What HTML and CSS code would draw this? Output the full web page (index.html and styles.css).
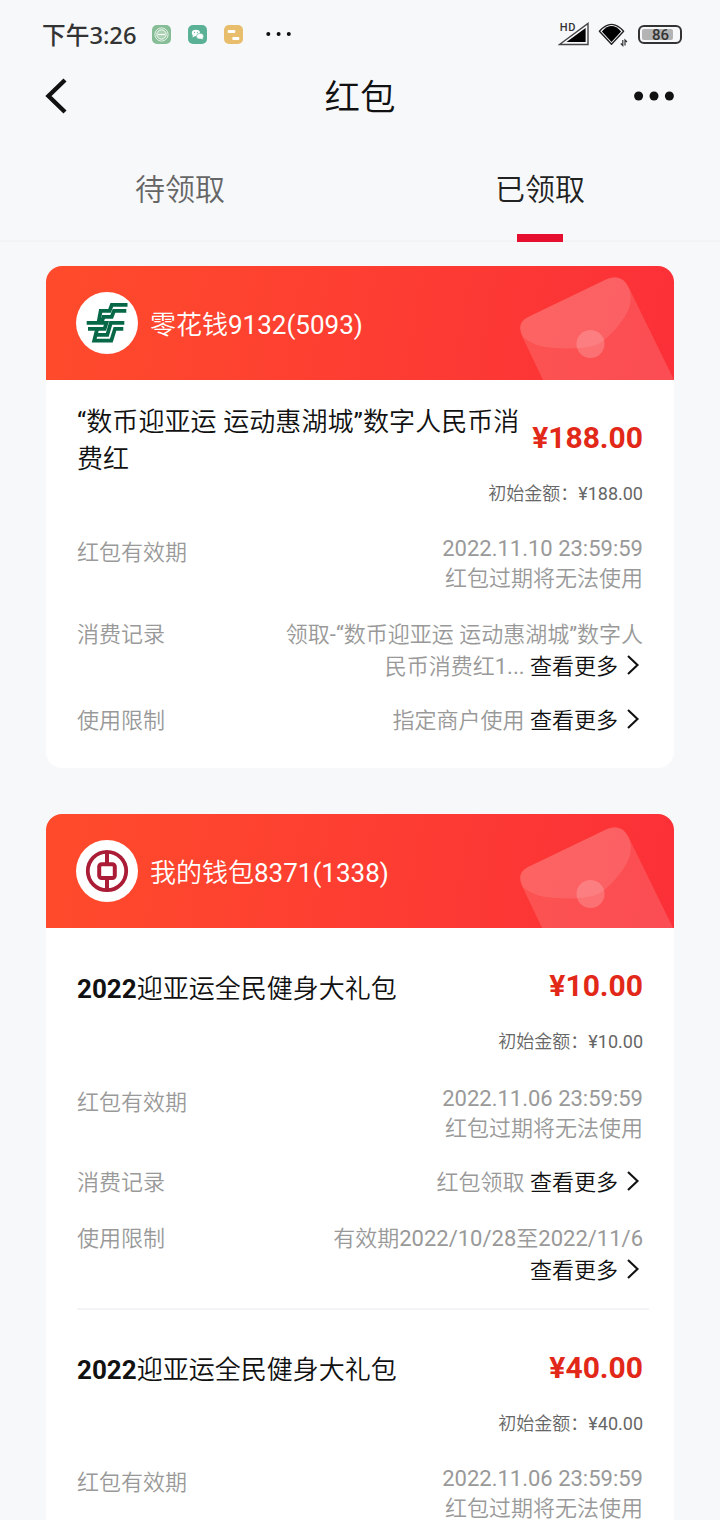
FILE: index.html
```html
<!DOCTYPE html>
<html lang="zh-CN">
<head>
<meta charset="utf-8">
<title>红包</title>
<link rel="stylesheet" href="styles.css">
</head>
<body>
<svg class="defs" width="0" height="0">
  <symbol id="chev" viewBox="0 0 14 22"><path d="M2 2 L11.5 11 L2 20" fill="none" stroke="#111" stroke-width="2.1"/></symbol>
  <symbol id="envelope" viewBox="0 0 160 114">
    <path d="M30 116 L8 70 Q2 57 14 51 L93 13 Q108 7 115 22 L161 116 Z" fill="#fff" fill-opacity=".14"/>
    <path d="M9 71 Q2 57 14 51 L93 13 Q108 7 115 22 Q121 38 107 56 Q97 70 86 77 Q74 84 40 82 Q20 81 9 71 Z" fill="#fff" fill-opacity=".1"/>
    <circle cx="76.5" cy="78" r="14" fill="#fff" fill-opacity=".19"/>
  </symbol>
</svg>
<div class="screen">
  <header class="top">
    <div class="status">
      <span class="clock">下午3:26</span>
      <svg class="app" viewBox="0 0 19 19"><rect width="19" height="19" rx="5" fill="#86bd96"/><circle cx="9.5" cy="9.5" r="6.6" fill="none" stroke="#e6f4e8" stroke-width="1"/><circle cx="9.5" cy="9.5" r="4.7" fill="#a9d1b2" stroke="#fff" stroke-width="1"/><path d="M6 9.5h7" stroke="#fff" stroke-width="1.2"/></svg>
      <svg class="app" viewBox="0 0 19 19"><rect width="19" height="19" rx="5" fill="#5bb196"/><ellipse cx="7.9" cy="8" rx="4.1" ry="3.3" fill="#fff"/><path d="M5 10l-.5 2.4 2.6-1.3z" fill="#fff"/><ellipse cx="12" cy="11.2" rx="3.6" ry="2.9" fill="#fff" stroke="#5bb196" stroke-width=".6"/><path d="M12.5 13.4l2.2 1.2-.3-2.2z" fill="#fff"/><circle cx="6.6" cy="7.3" r=".6" fill="#5bb196"/><circle cx="9.3" cy="7.3" r=".6" fill="#5bb196"/></svg>
      <svg class="app" viewBox="0 0 19 19"><rect width="19" height="19" rx="5" fill="#e8bd6c"/><rect x="3.7" y="5" width="7.6" height="3" rx="1" fill="#fff"/><rect x="8.3" y="12" width="7" height="3" rx="1" fill="#fff"/></svg>
      <svg class="more-apps" viewBox="0 0 26 4"><g fill="#111"><circle cx="2.3" cy="2" r="2"/><circle cx="12.6" cy="2" r="2"/><circle cx="22.8" cy="2" r="2"/></g></svg>
      <span class="hd">HD</span>
      <svg class="signal" viewBox="0 0 32 24"><path d="M1.5 22.5 L30 1.5 V22.5 Z" fill="#f7f8fa" stroke="#444" stroke-width="1.4"/><path d="M8.5 20 L27.6 6 V20 Z" fill="#000"/></svg>
      <svg class="wifi" viewBox="0 0 30 24"><path d="M1.4 8.3 Q13.5 -5.5 25.6 8.3 L13.5 21.3 Z" fill="#f7f8fa" stroke="#222" stroke-width="1.4" stroke-linejoin="round"/><path d="M3.9 8.5 Q13.5 -2.4 23.1 8.5 L13.5 19 Z" fill="#000"/><path d="M24.8 17v5.5l-2-2M27 22.5V17l2 2" fill="none" stroke="#333" stroke-width="1.2"/></svg>
      <span class="battery"><span class="charge">86</span></span>
    </div>
    <nav class="navbar">
      <svg class="back" viewBox="0 0 22 36"><path d="M20 2 L3.5 18 L20 34" fill="none" stroke="#111" stroke-width="4.4"/></svg>
      <h1>红包</h1>
      <svg class="dots" viewBox="0 0 40 10"><g fill="#111"><circle cx="4.6" cy="5" r="4.5"/><circle cx="20" cy="5" r="4.5"/><circle cx="35.4" cy="5" r="4.5"/></g></svg>
    </nav>
    <div class="tabs">
      <span class="tab">待领取</span>
      <span class="tab active">已领取</span>
    </div>
  </header>
  <main>
    <section class="card">
      <div class="card-head">
        <svg class="logo" viewBox="0 0 62 62"><circle cx="31" cy="31" r="31" fill="#fff"/><g fill="none" stroke="#066847" stroke-width="3.8"><path d="M51.5 12.8H35.8L33.6 18.8H24.7L22.4 31"/><path d="M50.3 18.8H38L35.7 24.8H27.5L25.5 31"/><path d="M10.7 30.9H30.5L28.6 36.8H12"/><path d="M48.3 30.9H34.8L31.3 42.8H20.5"/><path d="M47.3 36.8H39L35.3 48.6H18.2L21.2 36.8"/></g></svg>
        <span class="wallet">零花钱9132(5093)</span>
        <svg class="envelope"><use href="#envelope"/></svg>
      </div>
      <article class="packet compact">
        <div class="summary"><h2>“数币迎亚运 运动惠湖城”数字人民币消费红</h2><strong>¥188.00</strong></div>
        <p class="initial">初始金额：¥188.00</p>
        <div class="row date"><span class="label">红包有效期</span><span class="value">2022.11.10 23:59:59<br>红包过期将无法使用</span></div>
        <div class="row"><span class="label">消费记录</span><span class="value">领取-“数币迎亚运 运动惠湖城”数字人<br>民币消费红1... <a class="more">查看更多<svg class="chev"><use href="#chev"/></svg></a></span></div>
        <div class="row limit"><span class="label">使用限制</span><span class="value">指定商户使用 <a class="more">查看更多<svg class="chev"><use href="#chev"/></svg></a></span></div>
      </article>
    </section>
    <section class="card">
      <div class="card-head low">
        <svg class="logo" viewBox="0 0 62 62"><circle cx="31" cy="31" r="31" fill="#fff"/><g fill="none" stroke="#ab1d36"><circle cx="31" cy="31" r="19.2" stroke-width="3.8"/><path d="M31 12V23M31 39V50" stroke-width="4"/><rect x="23.2" y="24.2" width="15.6" height="13.8" rx="2.5" stroke-width="4"/></g></svg>
        <span class="wallet">我的钱包8371(1338)</span>
        <svg class="envelope"><use href="#envelope"/></svg>
      </div>
      <article class="packet">
        <div class="summary"><h2><b>2022</b>迎亚运全民健身大礼包</h2><strong>¥10.00</strong></div>
        <p class="initial">初始金额：¥10.00</p>
        <div class="row date"><span class="label">红包有效期</span><span class="value">2022.11.06 23:59:59<br>红包过期将无法使用</span></div>
        <div class="row"><span class="label">消费记录</span><span class="value">红包领取 <a class="more">查看更多<svg class="chev"><use href="#chev"/></svg></a></span></div>
        <div class="row limit"><span class="label">使用限制</span><span class="value">有效期2022/10/28至2022/11/6<br><a class="more">查看更多<svg class="chev"><use href="#chev"/></svg></a></span></div>
      </article>
      <article class="packet next">
        <div class="summary"><h2><b>2022</b>迎亚运全民健身大礼包</h2><strong>¥40.00</strong></div>
        <p class="initial">初始金额：¥40.00</p>
        <div class="row date"><span class="label">红包有效期</span><span class="value">2022.11.06 23:59:59<br>红包过期将无法使用</span></div>
      </article>
    </section>
  </main>
</div>
</body>
</html>
```
FILE: styles.css
```css
* { box-sizing: border-box; }
body {
  margin: 0;
  background: #f7f8fa;
  color: #111;
  font-family: Roboto, "Noto Sans CJK SC DemiLight", "Noto Sans CJK SC Light", "Noto Sans CJK SC", sans-serif;
}
h1, h2, p { margin: 0; font-weight: 400; }
svg { display: block; flex: none; }
.defs { position: absolute; }
.screen { width: 720px; height: 1520px; overflow: hidden; }

.top { height: 242px; border-bottom: 2px solid #f2f3f5; }
.status { display: flex; align-items: center; height: 68px; padding: 0 38px 0 42px; }
.clock { width: 110px; padding-top: 1px; font: 500 23.7px/34px "Noto Sans", "Noto Sans CJK SC", sans-serif; color: #333; white-space: nowrap; }
.app { width: 19px; height: 19px; margin-right: 17px; }
.more-apps { width: 26px; height: 4px; margin-left: 6px; }
.hd { margin: -13px -18px 0 auto; font: 500 11px/12px Roboto, sans-serif; color: #333; letter-spacing: .6px; z-index: 1; }
.signal { width: 32px; height: 24px; }
.wifi { width: 30px; height: 24px; margin: 2px 10px 0 8px; }
.battery { width: 44px; height: 19px; padding: 2px; border: 2px solid #333; border-radius: 6px; }
.charge { display: block; width: 31px; height: 11px; padding-left: 10px; background: #b3b3b3; color: #333; font: 500 15px/12px Roboto, sans-serif; border-radius: 2px; }

.navbar { display: flex; align-items: center; justify-content: space-between; height: 56px; padding: 0 46px 0 45px; }
.back { width: 22px; height: 36px; margin-right: 18px; }
.navbar h1 { padding: 4px 0 0 1px; font-size: 35.5px; line-height: 52px; }
.dots { width: 40px; height: 10px; }

.tabs { display: grid; grid-template-columns: 1fr 1fr; height: 118px; }
.tab { display: flex; flex-direction: column; align-items: center; justify-content: space-between; padding-top: 46px; font-size: 30px; line-height: 40px; color: #666; }
.tab.active { color: #222; }
.tab.active::after { content: ""; width: 46px; height: 8px; background: #e60f30; }

main { display: flex; flex-direction: column; gap: 46px; padding: 24px 46px 0; }
.card { border-radius: 16px; background: #fff; overflow: hidden; }
.card-head { display: flex; align-items: center; height: 114px; padding-left: 30px; background: linear-gradient(100deg, #ff4b2b, #fb3038); color: #fff; }
.logo { width: 62px; height: 62px; margin-right: 12px; }
.wallet { font-size: 26px; line-height: 36px; padding-top: 4px; }
.envelope { width: 160px; height: 114px; margin-left: auto; }
.low .envelope { margin-top: 4px; }

.packet { height: 380px; padding: 22px 31px 0; }
.packet.compact { height: 388px; }
.packet.next { padding-top: 24px; background: linear-gradient(#f3f4f5, #f3f4f5) 31px 0 / 572px 2px no-repeat; }
.summary { display: flex; align-items: center; justify-content: space-between; height: 74px; }
.summary h2 { width: 446px; padding-top: 4px; font-size: 26px; line-height: 37px; }
.compact h2 { letter-spacing: .08px; }
.next h2 { padding-top: 2px; }
.summary strong { padding-bottom: 3px; font-size: 30px; line-height: 36px; color: #e22818; }
.initial { padding-top: 5px; font-size: 18px; line-height: 26px; color: #666; text-align: right; }
.row { display: flex; justify-content: space-between; margin-top: 24px; font-size: 22px; line-height: 32px; color: #999; }
.date { height: 59px; margin-top: 29px; line-height: 30px; }
.date .label { padding-top: 4px; }
.compact .date { margin-top: 27px; height: 61px; }
.next .date { margin-top: 27px; }
.compact .limit { margin-top: 22px; }
.value { text-align: right; white-space: nowrap; }
.more { color: #111; }
.chev { display: inline-block; width: 14px; height: 22px; margin: 0 3px 0 8px; vertical-align: -2px; }
```
